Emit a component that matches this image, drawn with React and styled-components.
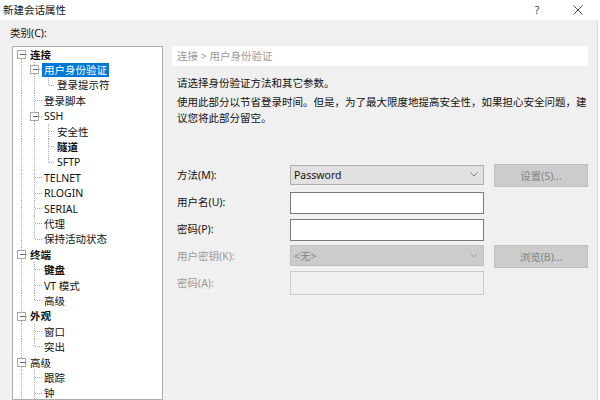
import React from "react";
import styled, { createGlobalStyle } from "styled-components";

const GlobalStyle = createGlobalStyle`
  html, body {
    margin: 0;
    padding: 0;
    background: #ffffff;
  }
  body {
    width: 600px;
    height: 400px;
    overflow: hidden;
    font-family: "Noto Sans", "Noto Sans CJK SC", sans-serif;
    font-size: 10.5px;
    color: #111;
  }
  * {
    box-sizing: border-box;
  }
`;

const ROW_H = 15.4;
const STEP = 13.5;

const Window = styled.div`
  width: 600px;
  height: 400px;
  display: flex;
  flex-direction: column;
`;

const TitleBar = styled.div`
  height: 20px;
  display: flex;
  align-items: center;
  padding: 0 7px 0 3px;
  background: #ffffff;
`;

const Title = styled.div`
  line-height: 20px;
  flex: 1;
`;

const TitleButton = styled.div`
  width: 30px;
  height: 20px;
  display: flex;
  align-items: center;
  justify-content: center;
  color: #444;
  font-size: 10.5px;
  margin-left: ${(p) => (p.$gap ? "11px" : "0")};
`;

const Body = styled.div`
  width: 598px;
  flex: 1;
  display: flex;
  background: #f0f0f0;
  border-right: 1px solid #dadada;
  padding: 6px 0 0 10px;
  overflow: hidden;
`;

const LeftCol = styled.div`
  width: 153px;
  display: flex;
  flex-direction: column;
`;

const FieldLabel = styled.div`
  line-height: 15px;
  margin-bottom: 5px;
`;

const TreeBox = styled.div`
  margin-left: 2px;
  width: 151px;
  height: 360px;
  background: #ffffff;
  border: 1px solid #adadad;
  overflow: hidden;
`;

const TreeRow = styled.div`
  height: ${ROW_H}px;
  display: flex;
  align-items: center;
  white-space: nowrap;
`;

const NodeLabel = styled.span`
  padding: 0 2px;
  line-height: 14px;
  height: 14px;
  font-weight: ${(p) => (p.$bold ? 700 : 400)};
  background: ${(p) => (p.$selected ? "#0078d7" : "transparent")};
  color: ${(p) => (p.$selected ? "#ffffff" : "#111")};
`;

const RightCol = styled.div`
  width: 416px;
  margin: 20px 0 0 9px;
  display: flex;
  flex-direction: column;
`;

const Crumb = styled.div`
  height: 20px;
  line-height: 20px;
  padding-left: 5px;
  background: #ffffff;
  color: #9a9a9a;
`;

const Para = styled.p`
  margin: ${(p) => p.$top}px 0 0;
  padding-left: 5px;
  line-height: 16px;
`;

const Form = styled.div`
  margin-top: 35px;
  padding-left: 5px;
  display: flex;
  flex-direction: column;
`;

const FormRow = styled.div`
  height: 27px;
  display: flex;
  align-items: center;
`;

const RowLabel = styled.div`
  width: 113px;
  color: ${(p) => (p.$disabled ? "#9a9a9a" : "#111")};
`;

const Select = styled.div`
  width: 194px;
  height: ${(p) => (p.$disabled ? 21 : 20)}px;
  display: flex;
  align-items: center;
  justify-content: space-between;
  padding: 0 5px 0 3px;
  background: ${(p) => (p.$disabled ? "#cccccc" : "#e1e1e1")};
  border: 1px solid ${(p) => (p.$disabled ? "#bfbfbf" : "#adadad")};
  color: ${(p) => (p.$disabled ? "#838383" : "#111")};
`;

const TextBox = styled.div`
  width: 194px;
  height: ${(p) => (p.$disabled ? 24 : 22)}px;
  margin-top: ${(p) => (p.$disabled ? 0 : 2)}px;
  background: ${(p) => (p.$disabled ? "#f0f0f0" : "#ffffff")};
  border: 1px solid ${(p) => (p.$disabled ? "#cccccc" : "#7a7a7a")};
`;

const Button = styled.div`
  width: 94px;
  height: 23px;
  margin: 2px 0 0 10px;
  display: flex;
  align-items: center;
  justify-content: center;
  background: #cccccc;
  border: 1px solid #bfbfbf;
  color: #838383;
`;

// "more" keeps a guide line running below the last visible row
const tree = [
  {
    t: "连接",
    b: true,
    c: [
      { t: "用户身份验证", sel: true, c: [{ t: "登录提示符" }] },
      { t: "登录脚本" },
      { t: "SSH", c: [{ t: "安全性" }, { t: "隧道", b: true }, { t: "SFTP" }] },
      { t: "TELNET" },
      { t: "RLOGIN" },
      { t: "SERIAL" },
      { t: "代理" },
      { t: "保持活动状态" },
    ],
  },
  { t: "终端", b: true, c: [{ t: "键盘", b: true }, { t: "VT 模式" }, { t: "高级" }] },
  { t: "外观", b: true, c: [{ t: "窗口" }, { t: "突出" }] },
  { t: "高级", more: true, c: [{ t: "跟踪" }, { t: "钟", more: true }] },
];

function flatten(nodes, level, cont, out) {
  nodes.forEach((n, i) => {
    const last = i === nodes.length - 1 && !n.more;
    out.push({ ...n, level, cont, last, firstRoot: level === 0 && i === 0 });
    if (n.c) flatten(n.c, level + 1, [...cont, !last], out);
  });
  return out;
}

const rows = flatten(tree, 0, [], []);

const colX = (l) => Math.floor(8 + STEP * l) + 0.5;

const Gutter = ({ row }) => {
  const w = Math.round(15 + STEP * row.level);
  const mid = 7.5;
  const cx = colX(row.level);
  const dash = { stroke: "#a8a8a8", strokeWidth: 1, strokeDasharray: "1 1" };
  return (
    <svg width={w} height={ROW_H} style={{ flex: "none" }} shapeRendering="crispEdges">
      {row.cont.map((on, l) =>
        on ? <line key={l} x1={colX(l)} x2={colX(l)} y1={0} y2={ROW_H} {...dash} /> : null
      )}
      {!row.firstRoot && <line x1={cx} x2={cx} y1={0} y2={mid} {...dash} />}
      {!row.last && <line x1={cx} x2={cx} y1={mid} y2={ROW_H} {...dash} />}
      <line x1={cx} x2={w} y1={mid} y2={mid} {...dash} />
      {row.c && (
        <g>
          <rect x={cx - 4} y={mid - 4} width={8} height={8} fill="#fff" stroke="#a8a8a8" />
          <line x1={cx - 2} x2={cx + 3} y1={mid} y2={mid} stroke="#606060" />
        </g>
      )}
    </svg>
  );
};

const Chevron = ({ color }) => (
  <svg width="8" height="5" viewBox="0 0 8 5">
    <polyline points="0.5,0.5 4,4 7.5,0.5" fill="none" stroke={color} strokeWidth="1" />
  </svg>
);

export default function App() {
  return (
    <Window>
      <GlobalStyle />
      <TitleBar>
        <Title>新建会话属性</Title>
        <TitleButton>?</TitleButton>
        <TitleButton $gap>
          <svg width="10" height="10" viewBox="0 0 10 10">
            <path d="M0.5 0.5 L9.5 9.5 M9.5 0.5 L0.5 9.5" stroke="#444" strokeWidth="1" />
          </svg>
        </TitleButton>
      </TitleBar>
      <Body>
        <LeftCol>
          <FieldLabel>类别(C):</FieldLabel>
          <TreeBox>
            {rows.map((r, i) => (
              <TreeRow key={i}>
                <Gutter row={r} />
                <NodeLabel $bold={r.b} $selected={r.sel}>
                  {r.t}
                </NodeLabel>
              </TreeRow>
            ))}
          </TreeBox>
        </LeftCol>
        <RightCol>
          <Crumb>连接 &gt; 用户身份验证</Crumb>
          <Para $top={9}>请选择身份验证方法和其它参数。</Para>
          <Para $top={3}>
            使用此部分以节省登录时间。但是，为了最大限度地提高安全性，如果担心安全问题，建议您将此部分留空。
          </Para>
          <Form>
            <FormRow>
              <RowLabel>方法(M):</RowLabel>
              <Select>
                <span>Password</span>
                <Chevron color="#808080" />
              </Select>
              <Button>设置(S)...</Button>
            </FormRow>
            <FormRow>
              <RowLabel>用户名(U):</RowLabel>
              <TextBox />
            </FormRow>
            <FormRow>
              <RowLabel>密码(P):</RowLabel>
              <TextBox />
            </FormRow>
            <FormRow>
              <RowLabel $disabled>用户密钥(K):</RowLabel>
              <Select $disabled>
                <span>&lt;无&gt;</span>
                <Chevron color="#a8a8a8" />
              </Select>
              <Button>浏览(B)...</Button>
            </FormRow>
            <FormRow>
              <RowLabel $disabled>密码(A):</RowLabel>
              <TextBox $disabled />
            </FormRow>
          </Form>
        </RightCol>
      </Body>
    </Window>
  );
}
